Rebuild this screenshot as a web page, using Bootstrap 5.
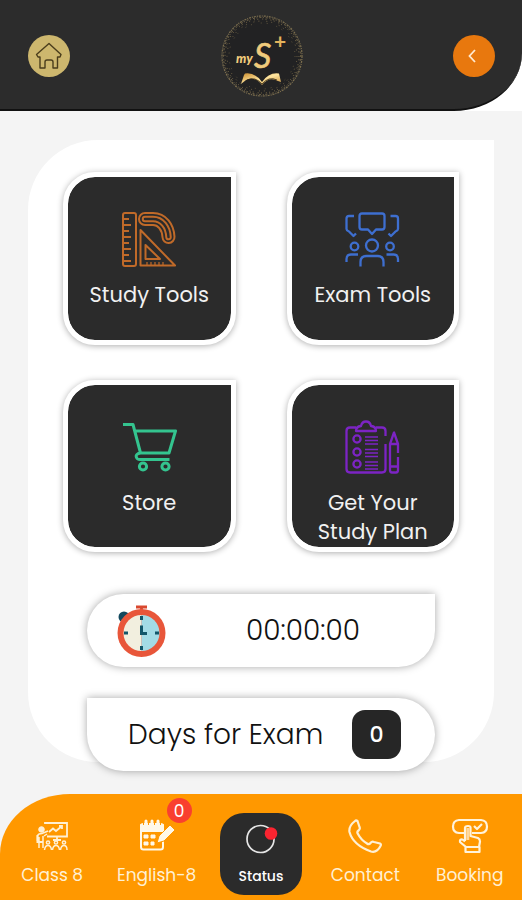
<!DOCTYPE html>
<html lang="en">
<head>
<meta charset="utf-8">
<meta name="viewport" content="width=device-width, initial-scale=1">
<title>myS+</title>
<link href="https://cdn.jsdelivr.net/npm/bootstrap@5.3.0/dist/css/bootstrap.min.css" rel="stylesheet">
<style>
  body { font-family: Poppins, Inter, "Open Sans", sans-serif; background: #f4f4f4; color: #111; }
  a { text-decoration: none; }
  svg { display: block; flex: none; }
  .top-wrap { background: #fff; }
  .top-bar { background: #2c2c2c; padding: 15px 27px 12px 28px; border-bottom: 2px solid #111; border-bottom-right-radius: 68px 58px; }
  .round-btn { width: 42px; height: 42px; }
  .round-home { background: #cdb76e; }
  .round-back { background: #e8780e; }
  .panel { background: #fff; margin: 29px 28px 0; padding: 32px 35px 0; border-radius: 70px 0 70px 70px; }
  .tiles { display: grid; grid-template-columns: 1fr 1fr; gap: 35px 51px; }
  .tile { aspect-ratio: 1; background: #2b2b2b; background-clip: padding-box; border: 5px solid #fff; padding: 35px 20px 0; border-radius: 32px 0 32px 32px; box-shadow: 0 1px 6px rgba(0,0,0,.32); color: #f1f1f1; font-size: 21px; line-height: 29px; gap: 13px; }
  .tile:hover { color: #fff; }
  .tile span { white-space: nowrap; }
  .pills { margin: 42px 24px 0; gap: 31px; }
  .pill { background: #fff; height: 73px; box-shadow: 0 0 9px rgba(0,0,0,.35); font-size: 28px; }
  .pill-timer { border-radius: 37px 0 37px 37px; padding: 0 30px; }
  .pill-days { border-radius: 0 37px 37px 37px; padding: 0 34px 0 41px; margin-bottom: -9px; }
  .clock-text { font-weight: 300; padding-left: 34px; }
  .days-text { font-weight: 300; }
  .days-count { width: 49px; height: 49px; border-radius: 13px; background: #262626; color: #fff; font-size: 22px; font-weight: 500; }
  .bottom-bar { background: #ff9800; padding: 19px 0 5px; border-top-left-radius: 70px 60px; }
  .tab { position: relative; height: 82px; padding-top: 5px; gap: 8px; color: #fff0d4; font-size: 17px; line-height: 26px; white-space: nowrap; }
  .tab:hover { color: #fff; }
  .tab svg { height: 36px; }
  .tab-active { background: #2b2b2b; margin: 0 11px; border-radius: 24px; color: #fff; font-size: 14px; font-weight: 500; line-height: 29px; }
  .count-dot { position: absolute; left: 50%; top: -15px; margin-left: 10px; width: 25px; height: 25px; border-radius: 50%; background: #f9402f; color: #fff; font-size: 17px; }
</style>
<script src="https://cdn.jsdelivr.net/npm/bootstrap@5.3.0/dist/js/bootstrap.bundle.min.js"></script>
</head>
<body>
<div class="min-vh-100 d-flex flex-column">

  <div class="top-wrap">
    <header class="top-bar d-flex align-items-center justify-content-between">
      <a href="#" class="round-btn round-home rounded-circle d-flex align-items-center justify-content-center" aria-label="Home">
        <svg width="28" height="28" viewBox="0 0 28 28" fill="none" stroke="#4a3d1c" stroke-width="1.4" stroke-linejoin="round"><path d="M14 1.500 26 12.500 25 15H22.500V26H18V20Q18 18 16 18H12Q10 18 10 20V26H5V15H3L1.500 12.500Z"/></svg>
      </a>
      <svg width="82" height="82" viewBox="0 0 82 82" role="img" aria-label="myS+ logo">
        <defs><linearGradient id="gold" x1="0" y1="0" x2="1" y2="1"><stop offset="0" stop-color="#c98a2b"/><stop offset=".5" stop-color="#ffe6a0"/><stop offset="1" stop-color="#c98d35"/></linearGradient></defs>
        <circle cx="41" cy="41" r="39" fill="#222223"/>
        <g fill="none" stroke="#a08b5c">
          <circle cx="41" cy="41" r="40" stroke-width="1.200" stroke-dasharray="2 1 1 1" opacity=".7"/>
          <circle cx="41" cy="41" r="38.500" stroke-width="1" stroke-dasharray="1 2 2 1.500" opacity=".65"/>
          <circle cx="41" cy="41" r="37" stroke-width="1" stroke-dasharray="1 2.300 1 4" opacity=".7"/>
          <circle cx="41" cy="41" r="35" stroke-width="1" stroke-dasharray="1 4 1 7" opacity=".6"/>
          <circle cx="41" cy="41" r="33" stroke-width="1" stroke-dasharray="1 9 1 5" opacity=".45"/>
        </g>
        <text y="48" font-family="Lato, sans-serif" font-style="italic" fill="#f0cb7c"><tspan x="15" font-weight="900" font-size="13">my</tspan><tspan x="33" y="53" font-weight="400" font-size="34" stroke="#f0cb7c" stroke-width=".6">S</tspan><tspan x="53" y="34" font-style="normal" font-weight="700" font-size="21" fill="#e3b35c">+</tspan></text>
        <path d="M20 69 23 60 24 58.500Q34 57 41 67 48 57 58 58.500L60 67 57 66Q48 61 41 70 34 61 25 65Z" fill="url(#gold)"/>
        <path d="M26 65Q34 61 41 69 48 61 56 65" fill="none" stroke="#31240f" stroke-width=".8"/>
      </svg>
      <button type="button" class="round-btn round-back rounded-circle border-0 p-0 d-flex align-items-center justify-content-center" aria-label="Back">
        <svg width="12" height="14" viewBox="0 0 12 14" fill="none" stroke="#ffe9d0" stroke-width="1.800"><path d="M7 1 1.500 7 7 13"/></svg>
      </button>
    </header>
  </div>

  <main class="panel">
    <div class="tiles">
      <a href="#" class="tile d-flex flex-column align-items-center text-center">
        <svg width="55" height="55" viewBox="0 0 55 55" fill="none" stroke="#c06a29" stroke-width="2" stroke-linejoin="round">
          <rect x="1" y="1" width="13" height="53" rx="2"/>
          <path d="M2 7H7M2 13H9M2 19H7M2 25H9M2 31H7M2 37H9M2 43H7M2 49H9"/>
          <g stroke-linecap="round"><path d="M23 7H31C40 7 46 15 46.500 25" stroke-width="14"/><path d="M23 7H31C40 7 46 15 46.500 25" stroke="#2b2b2b" stroke-width="10"/><path d="M23 7H31C40 7 46 15 46.500 25" stroke-width="6.500"/><path d="M23 7H31C40 7 46 15 46.500 25" stroke="#2b2b2b" stroke-width="2.500"/></g>
          <path d="M18.500 18 53 53.500H18.500ZM23.500 33V47H38Z"/>
          <path d="M25 50V53M29 50V53M33 50V53M37 50V53M41 50V53" stroke-width="1.200"/>
        </svg>
        <span>Study Tools</span>
      </a>
      <a href="#" class="tile d-flex flex-column align-items-center text-center">
        <svg width="55" height="55" viewBox="0 0 55 55" fill="none" stroke="#3e6fd0" stroke-width="2.300" stroke-linejoin="round">
          <path d="M17 1.500H37Q39.500 1.500 39.500 4V15Q39.500 17.500 37 17.500H31L27 22 23 17.500H17Q14.500 17.500 14.500 15V4Q14.500 1.500 17 1.500Z"/>
          <path d="M9 4H4Q1.500 4 1.500 6.500V17Q1.500 18.500 4 19.500L8.500 24 11 21.500M45.500 4H50.500Q53 4 53 6.500V17Q53 18.500 50.500 19.500L46 24 43.500 21.500"/>
          <circle cx="27" cy="33.500" r="6"/><circle cx="9.500" cy="34.500" r="3.800"/><circle cx="45" cy="34.500" r="3.800"/>
          <path d="M15.500 54.500V50Q15.500 44 21.500 44H32.500Q38.500 44 38.500 50V54.500M1.500 50V47Q1.500 42.500 6 42.500H13M53 50V47Q53 42.500 48.500 42.500H41.500"/>
        </svg>
        <span>Exam Tools</span>
      </a>
      <a href="#" class="tile d-flex flex-column align-items-center text-center">
        <svg width="55" height="55" viewBox="0 0 55 55" fill="none" stroke="#34c48f" stroke-width="3" stroke-linejoin="round">
          <path d="M1 4.500H11L18.500 33H47L53.500 11H13M18.500 33Q13 34 14.500 37.500 15 39.500 18 39.500H47.500"/>
          <circle cx="21" cy="46.500" r="3.600"/><circle cx="43.500" cy="46.500" r="3.600"/>
        </svg>
        <span>Store</span>
      </a>
      <a href="#" class="tile d-flex flex-column align-items-center text-center">
        <svg width="55" height="55" viewBox="0 0 55 55" fill="none" stroke="#7c24c4" stroke-width="2.300" stroke-linejoin="round">
          <path d="M11 7.500H5Q1.500 7.500 1.500 11V49Q1.500 52.500 5 52.500H37Q40.500 52.500 40.500 49V24M31 7.500H37Q40.500 7.500 40.500 11V16"/>
          <path d="M11 11Q11 6.500 16 6 17 1.500 21 1.500T26 6Q31 6.500 31 11Z"/>
          <circle cx="12" cy="19" r="3.600"/><circle cx="12" cy="32" r="3.600"/><circle cx="12" cy="44" r="3.600"/>
          <path d="M20 17H33M20 20.500H33M20 24H33M20 29.500H33M20 33H33M20 36.500H33M20 42H33M20 45.500H33M20 49H33" stroke-width="1.500"/>
          <path d="M53 33V24L49 12.500 45 24V50Q45 52.500 47 52.500H51Q53 52.500 53 50V37M45 24H53M45 46.500H53"/>
        </svg>
        <span>Get Your<br>Study Plan</span>
      </a>
    </div>

    <div class="pills d-flex flex-column">
      <div class="pill pill-timer d-flex align-items-center">
        <svg width="50" height="52" viewBox="0 0 50 52">
          <circle cx="7" cy="12" r="5.500" fill="#12485e"/>
          <path d="M19 2H30M24.500 2V9" stroke="#d9482f" stroke-width="2.800" fill="none"/>
          <circle cx="24.500" cy="28" r="24" fill="#e8563a"/>
          <path d="M24.500 10A18 18 0 0 0 24.500 46Z" fill="#f2efdf"/><path d="M24.500 10A18 18 0 0 1 24.500 46Z" fill="#a3dbe6"/>
          <path d="M24.500 11V15M24.500 41V45M7 28H11M38 28H42M24.500 20.500V28.500H30" stroke="#12566a" stroke-width="3" fill="none"/>
        </svg>
        <span class="clock-text flex-grow-1 text-center">00:00:00</span>
      </div>
      <div class="pill pill-days d-flex align-items-center justify-content-between">
        <span class="days-text">Days for Exam</span>
        <span class="days-count d-flex align-items-center justify-content-center">0</span>
      </div>
    </div>
  </main>

  <nav class="bottom-bar mt-auto">
    <div class="row g-0 row-cols-5">
      <div class="col"><a href="#" class="tab d-flex flex-column align-items-center">
        <svg width="32" height="36" viewBox="0 0 32 36" fill="none" stroke="#fff0d4" stroke-width="1.500">
          <path d="M9 6V5H31V18.500H11M13 14 17 10.500 20 13 26 8M23 8H26V11M21 18.500V22M17 22H25" stroke-width="1.800"/>
          <circle cx="5.500" cy="11.500" r="2.800" fill="#fff0d4" stroke-width="1"/>
          <path d="M1.500 23V18Q2 15.500 6 15.500L12 13M3 19V30M7 18V30M8 18 11 16"/>
          <path d="M1.500 17V24H7" stroke-width="2"/>
          <circle cx="12" cy="24.500" r="1.600"/><circle cx="20" cy="24.500" r="1.600"/><circle cx="28" cy="24.500" r="1.600"/>
          <path d="M8.500 32Q9 27.500 12 27.500T15.500 32M16.500 32Q17 27.500 20 27.500T23.500 32M24.500 32Q25 27.500 28 27.500T31 32"/>
        </svg><span>Class 8</span></a></div>
      <div class="col"><a href="#" class="tab d-flex flex-column align-items-center">
        <svg width="36" height="36" viewBox="0 0 36 36" fill="none" stroke="#fff8e8" stroke-width="2" stroke-linejoin="round">
          <path d="M24 23V29Q24 31.500 21.500 31.500H4.500Q2 31.500 2 29V8Q2 6 4.500 6H21.500Q24 6 24 8V11"/>
          <path d="M2 7H24V13H2Z" fill="#fff8e8"/>
          <path d="M7 3V8M13 3V8M19 3V8" stroke-width="3" stroke-linecap="round"/><path d="M9.500 3V7M15.500 3V7M4.500 3V7M21.500 3V7" stroke="#ff9800" stroke-width="1"/>
          <path d="M5 17H9V20H5ZM12 17H16V20H12ZM5 24H9V27H5ZM12 24H15V27H12Z" fill="#fff8e8" stroke-width="1"/>
          <path d="M18 25 20 18 31 7 36 12 25 23Z" fill="#fff8e8" stroke="#ff9800" stroke-width="1"/>
        </svg><span>English-8</span><span class="count-dot d-flex align-items-center justify-content-center">0</span></a></div>
      <div class="col"><a href="#" class="tab tab-active d-flex flex-column align-items-center" aria-current="page">
        <svg width="36" height="36" viewBox="0 0 36 36"><circle cx="17.500" cy="21" r="13.500" fill="none" stroke="#e6e6e6" stroke-width="1.700"/><circle cx="28" cy="15.500" r="6.300" fill="#fb2430"/></svg>
        <span>Status</span></a></div>
      <div class="col"><a href="#" class="tab d-flex flex-column align-items-center">
        <svg width="36" height="36" viewBox="0 0 36 36" fill="none" stroke="#fff0d4" stroke-width="2.200" stroke-linejoin="round"><path d="M8 3Q9 2 10.500 3L12.500 9Q13.500 11 11.500 12.500 9.500 14 11 16 14 22 20 25.500 22 27 23.500 25 25 23 27 24L33 25.500Q34.500 26.500 33.500 28 30 35 24 33.500 6 27 2.500 14 1.500 8 8 3Z"/></svg>
        <span>Contact</span></a></div>
      <div class="col"><a href="#" class="tab d-flex flex-column align-items-center">
        <svg width="38" height="36" viewBox="0 0 38 36" fill="none" stroke="#fff3dc" stroke-width="2.200" stroke-linejoin="round">
          <path d="M13 15H8Q2 14.500 2 8.500T8 2H30Q36 2.500 36 8.500T30 15H21"/>
          <path d="M23 8 26 11 31 6"/>
          <path d="M14 23V10Q14 8 17 8T19.500 10V18L27 20Q29 21 29 23.500L28 29H15L9 24Q8.500 21 11.500 21.500L14 23.500M14.500 29H28.500V34H14.500Z"/><path d="M16.800 10V22" stroke="#ffd9a0" stroke-width="3"/>
        </svg>
        <span>Booking</span></a></div>
    </div>
  </nav>
</div>
</body>
</html>
